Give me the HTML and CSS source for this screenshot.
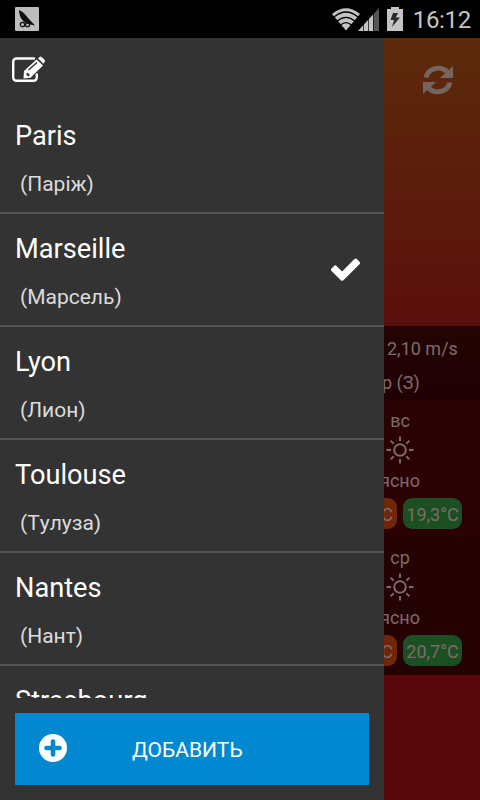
FILE: index.html
```html
<!DOCTYPE html>
<html lang="uk">
<head>
  <meta charset="UTF-8">
  <meta name="viewport" content="width=device-width, initial-scale=1">
  <title>Weather</title>
  <link rel="stylesheet" href="styles.css">
</head>
<body>

  <header class="status-bar">
    <svg class="app-icon" viewBox="0 0 24 24">
      <rect width="24" height="24" rx="1" fill="#bdbdbd"/>
      <path d="M4 3Q9 5 13 11L20 18.500L13 17L9 15Q4 10 4 3Z" fill="#111"/>
      <circle cx="7.500" cy="17.500" r="2.200" fill="none" stroke="#111" stroke-width="1.300"/>
      <circle cx="12.500" cy="17.800" r="2" fill="none" stroke="#111" stroke-width="1.300"/>
    </svg>
    <div class="status-icons">
      <svg class="wifi" viewBox="0 0 28 23">
        <path d="M14 22.500L0 6Q14-5.500 28 6Z" fill="#c4c4c4"/>
        <path d="M2 9Q14-1 26 9M5 13.200Q14 5.500 23 13.200M8.500 17Q14 12.200 19.500 17" fill="none" stroke="#000" stroke-width="1.300"/>
      </svg>
      <svg class="signal" viewBox="0 0 22 24">
        <path d="M0 24L15.500 7V24Z" fill="#c4c4c4"/>
        <path d="M16 6.500L21 1V24H16Z" fill="#555"/>
        <path d="M5.500 16v8M10.500 11v13M15.500 6v18" stroke="#000" stroke-width=".7"/>
      </svg>
      <svg class="battery" viewBox="0 0 16 24">
        <path d="M0 2H4V0H12V2H16V24H0Z" fill="#c4c4c4"/>
        <path d="M6 6H11L8.800 10.500H13L5 20L7 13H3.500Z" fill="#2a2a2a"/>
      </svg>
      <span class="clock">16:12</span>
    </div>
  </header>

  <main class="screen">
    <aside class="drawer">
      <div class="toolbar">
        <svg class="edit" viewBox="0 0 34 28">
          <path d="M22 2.500H5Q1.200 2.500 1.200 6.300V21Q1.200 24.800 5 24.800H21Q24.800 24.800 24.800 21V18.500" fill="none" stroke="#fff" stroke-width="2.400" stroke-linecap="round"/>
          <path fill-rule="evenodd" d="M11.500 22.500L12 15L24.500 3.500L31 9.500L18.500 21.800ZM16 13.500L17 14.500L25.500 7L24.500 6ZM14 18.500L16.500 20.500L18 19L15.500 16.500Z" fill="#fff"/>
          <path d="M26 2.500L27.500 1Q28.500 0 29.500 1L32.500 3.800Q33.500 4.800 32.500 6L31.500 7.800Z" fill="#fff"/>
        </svg>
      </div>

      <ul class="cities">
        <li class="city"><span class="name">Paris</span><span class="local">(Паріж)</span></li>
        <li class="city">
          <span class="name">Marseille</span><span class="local">(Марсель)</span>
          <svg class="check" viewBox="121 312 1550 1210"><path d="M1671 566q0 40-28 68l-724 724-136 136q-28 28-68 28t-68-28l-136-136-362-362q-28-28-28-68t28-68l136-136q28-28 68-28t68 28l294 295 656-657q28-28 68-28t68 28l136 136q28 28 28 68z" fill="#fff"/></svg>
        </li>
        <li class="city"><span class="name">Lyon</span><span class="local">(Лион)</span></li>
        <li class="city"><span class="name">Toulouse</span><span class="local">(Тулуза)</span></li>
        <li class="city"><span class="name">Nantes</span><span class="local">(Нант)</span></li>
        <li class="city"><span class="name">Strasbourg</span></li>
      </ul>

      <button class="add">
        <svg class="plus" viewBox="0 0 28 28">
          <circle cx="14" cy="14" r="14" fill="#fff"/>
          <path d="M14 7.500v13M7.500 14h13" stroke="#0288d1" stroke-width="4.600" stroke-linecap="round"/>
        </svg>
        <span class="add-label">ДОБАВИТЬ</span>
      </button>
    </aside>

    <section class="weather">
      <div class="sky">
        <svg class="refresh" viewBox="0 0 30 30">
          <path d="M3 12.500A12.500 11.500 0 0 1 24.500 7M27 17.500A12.500 11.500 0 0 1 5.500 23" fill="none" stroke="#74665f" stroke-width="4.800"/>
          <path d="M30 1V13H17ZM0 29V17H13Z" fill="#74665f"/>
        </svg>
      </div>
      <div class="wind">
        <div class="speed">2,10 m/s</div>
        <div class="direction">р (З)</div>
      </div>
      <div class="day">
        <div class="weekday">вс</div>
        <svg class="sun" viewBox="0 0 28 28"><circle cx="14" cy="14" r="5.800"/><path d="M14 .5v4.500M14 23v4.500M.5 14h4.500M23 14h4.500M4.600 4.600l3 3M20.400 20.400l3 3M4.600 23.400l3-3M20.400 7.600l3-3"/></svg>
        <div class="summary">ясно</div>
        <div class="temps"><span class="temp high">°C</span><span class="temp low">19,3°C</span></div>
      </div>
      <div class="day later">
        <div class="weekday">ср</div>
        <svg class="sun" viewBox="0 0 28 28"><circle cx="14" cy="14" r="5.800"/><path d="M14 .5v4.500M14 23v4.500M.5 14h4.500M23 14h4.500M4.600 4.600l3 3M20.400 20.400l3 3M4.600 23.400l3-3M20.400 7.600l3-3"/></svg>
        <div class="summary">ясно</div>
        <div class="temps"><span class="temp high">°C</span><span class="temp low">20,7°C</span></div>
      </div>
    </section>
  </main>

</body>
</html>
```
FILE: styles.css
```css
* {
  box-sizing: border-box;
}

body {
  margin: 0;
  width: 480px;
  height: 800px;
  overflow: hidden;
  background: #000;
  color: #fff;
  font-family: Roboto, sans-serif;
}

svg {
  display: block;
  flex: none;
}

/* status bar */
.status-bar {
  height: 38px;
  padding: 0 9px 0 15px;
  display: flex;
  justify-content: space-between;
  align-items: center;
}

.app-icon {
  width: 24px;
  height: 24px;
}

.status-icons {
  display: flex;
  align-items: center;
}

.wifi {
  width: 28px;
  height: 23px;
}

.signal {
  width: 22px;
  height: 24px;
  margin-left: -2px;
}

.battery {
  width: 16px;
  height: 24px;
  margin: 0 10px 0 7px;
}

.clock {
  padding-top: 2px;
  color: #c4c4c4;
  font-size: 24px;
  line-height: 36px;
  letter-spacing: -0.3px;
}

.screen {
  display: flex;
  height: 762px;
}

/* drawer */
.drawer {
  width: 384px;
  flex: none;
  background: #333;
  display: flex;
  flex-direction: column;
}

.toolbar {
  height: 63px;
  flex: none;
  padding: 18px 12px 0;
}

.edit {
  width: 34px;
  height: 28px;
}

.cities {
  flex: 1;
  min-height: 0;
  margin: 0;
  padding: 0;
  list-style: none;
  overflow: hidden;
}

.city {
  height: 113px;
  padding: 18px 24px 0 15px;
  border-bottom: 2px solid #555;
  display: grid;
  grid-template-columns: 1fr auto;
  grid-template-rows: 34px 62px;
}

.name {
  grid-column: 1;
  font-size: 27.2px;
  line-height: 34px;
}

.local {
  grid-column: 1;
  padding-left: 5px;
  color: #dcdcdc;
  font-size: 21px;
  line-height: 62px;
  font-kerning: none;
}

.check {
  grid-area: 1 / 2 / 3 / 3;
  width: 29px;
  height: 23px;
  margin-top: 26px;
}

.add {
  height: 72px;
  flex: none;
  margin: 15px;
  padding: 0 24px;
  display: flex;
  align-items: center;
  border: 0;
  background: #0288d1;
  color: #fff;
  font: 21px/70px Roboto, sans-serif;
}

.plus {
  width: 28px;
  height: 28px;
  margin-bottom: 2px;
}

.add-label {
  margin-left: 65px;
  padding-top: 2px;
}

/* dimmed weather screen next to the drawer */
.weather {
  flex: 1;
  min-width: 0;
  overflow: hidden;
  background: #59080b;
  color: #7d6b6b;
}

.sky {
  height: 288px;
  padding: 27px 27px 0 0;
  display: flex;
  justify-content: flex-end;
  background: linear-gradient(#5c2b0b, #5b0f0c);
}

.refresh {
  width: 30px;
  height: 30px;
}

.wind {
  height: 74px;
  padding: 6px 0 0 3px;
  background: linear-gradient(#240303, #200003);
  font-size: 18px;
  line-height: 34px;
  white-space: nowrap;
}

.direction {
  margin-left: -5px;
}

.day {
  width: 160px;
  height: 137px;
  margin-left: -64px;
  padding-top: 9px;
  display: flex;
  flex-direction: column;
  align-items: center;
  background: #2a0204;
  font-size: 18px;
  line-height: 24px;
}

.later {
  height: 138px;
  background: #240204;
}

.sun {
  width: 28px;
  height: 28px;
  margin: 3px 0 5px;
  fill: none;
  stroke: #7d6b6b;
  stroke-width: 2;
}

.temps {
  display: flex;
  gap: 6px;
  margin-top: 5px;
}

.temp {
  width: 59px;
  height: 31px;
  border-radius: 9px;
  line-height: 33px;
  text-align: center;
}

.high {
  padding-right: 4px;
  background: #702609;
  text-align: right;
}

.low {
  background: #1c4f22;
}
```
